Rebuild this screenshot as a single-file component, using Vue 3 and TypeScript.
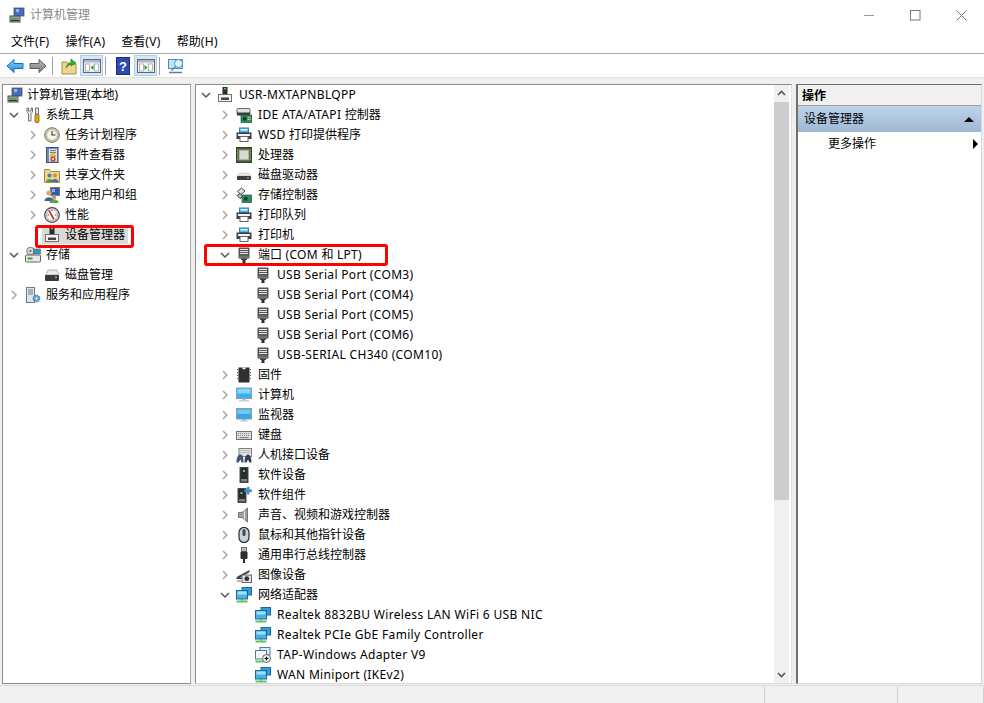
<script setup lang="ts">
const pc = `<rect x="5.500" y="0" width="5" height="7" fill="#2b2b2b"/><rect x="7" y="1" width="2" height="1.500" fill="#3fd060"/><rect x="1" y="7" width="14" height="8" fill="#6e6e6e"/><rect x="2" y="8" width="12" height="6" fill="#f2f2f2"/><rect x="4" y="10.500" width="8" height="2.500" fill="#444"/>`
const mgmt = `<rect x="5" y="1" width="10" height="8" fill="#1f3c8c" stroke="#777" stroke-width="1"/><rect x="6" y="2" width="8" height="6" fill="#3f6fd0"/><rect x="7" y="2" width="3" height="3" fill="#8fb4ee"/><rect x="1" y="9" width="10" height="6" fill="#9a9a9a" stroke="#555"/><rect x="3" y="11" width="6" height="1.500" fill="#38a838"/><path d="M2 13.500h8" stroke="#333"/>`
const tools = `<path d="M2 1v4l1.500 1.500V14h2.500V6.500L7.500 5V1L6 1v3H3.500V1z" fill="#ececec" stroke="#555" stroke-width=".8"/><rect x="10.500" y="1" width="3" height="6" fill="#e4e4e4" stroke="#555" stroke-width=".8"/><rect x="10" y="7.500" width="4" height="8" rx="1" fill="#e2a21a" stroke="#8a5a10" stroke-width=".8"/>`
const clock = `<circle cx="8" cy="8" r="7.300" fill="#d8d4bc" stroke="#6c6c60"/><circle cx="8" cy="8" r="5.400" fill="#f7f5e8" stroke="#a8a488" stroke-width=".7"/><path d="M8 4V8h3.500" fill="none" stroke="#333" stroke-width="1.100"/>`
const log = `<rect x="2.500" y="0.500" width="11.500" height="15" fill="#6f8cb2" stroke="#3f5272"/><rect x="5" y="2" width="8" height="12.500" fill="#dce6f2"/><path d="M6 3.500h6M6 5.500h6" stroke="#6a7a90"/><path d="M9 4.500l3 5H6z" fill="#f0c428" stroke="#a88410" stroke-width=".4"/><circle cx="9" cy="12" r="2.600" fill="#d83a30"/><circle cx="9" cy="12" r="1" fill="#fff"/>`
const share = `<path d="M.500 2.500h5l1 2h9v11H.500z" fill="#eed58c" stroke="#a88a44"/><circle cx="5.500" cy="8.500" r="2" fill="#4e79b8"/><path d="M2 15c0-4 7-4 7 0z" fill="#4a9a4e"/><circle cx="11" cy="8.500" r="2" fill="#c8943c"/><path d="M7.500 15c0-4 7-4 7 0z" fill="#3f6fb0"/>`
const users = `<rect x="6.500" y="0.500" width="9" height="8" fill="#2d5bb8" stroke="#777"/><rect x="8" y="2" width="3" height="3" fill="#8fb4ee"/><circle cx="5" cy="6" r="2.600" fill="#d8a868"/><path d="M.500 14c0-5 9-5 9 0z" fill="#3f5f9a"/><circle cx="10" cy="10" r="2.200" fill="#c89860"/><path d="M5.500 16c0-5 9-5 9 0z" fill="#5aa25a"/>`
const perf = `<circle cx="8" cy="8" r="7.300" fill="#ececec" stroke="#444" stroke-width="1.200"/><circle cx="8" cy="8" r="5.400" fill="#fff" stroke="#999" stroke-width=".7"/><path d="M5 3.500l5 9" stroke="#d02a20" stroke-width="1.600"/><path d="M3.500 8h1.500M11 8h1.500M8 3v1" stroke="#444"/>`
const storage = `<circle cx="5.500" cy="4" r="3.800" fill="#d8d8d8" stroke="#777"/><circle cx="5.500" cy="4" r="1" fill="#555"/><rect x=".500" y="8" width="15" height="7" rx="1" fill="#e8e8e8" stroke="#666"/><rect x="2.500" y="10.500" width="5" height="2" fill="#39a839"/><rect x="8.500" y="2" width="7" height="5" fill="#2f98c4" stroke="#666" stroke-width=".7"/>`
const disk = `<path d="M4 3h9l2 5H2z" fill="#ececec" stroke="#a0a0a0" stroke-width=".8"/><rect x="1" y="8" width="14" height="6" rx="1" fill="#3a3a3a"/><rect x="11" y="9.500" width="2" height="1.600" fill="#56d056"/>`
const services = `<rect x="1.500" y="0.500" width="8" height="15" fill="#dfe5ec" stroke="#6c7a88"/><path d="M3 3h5M3 5h5M3 7h5" stroke="#6c7a88"/><circle cx="11.500" cy="11.500" r="3.300" fill="#6fa0d0" stroke="#2f5f90" stroke-dasharray="1.500 .7"/><circle cx="11.500" cy="11.500" r="1.100" fill="#fff"/>`
const ide = `<rect x="1" y="1.500" width="13" height="6" rx="1" fill="#e0e0e0" stroke="#666"/><rect x="1" y="5.500" width="13" height="3" fill="#3a3a3a"/><rect x="5" y="8" width="11" height="7.500" fill="#2e8a62" stroke="#155a3c" stroke-width=".7"/><rect x="7" y="10" width="3.500" height="3.500" fill="#173b2b"/><path d="M11.500 10.500h3M11.500 12.500h3" stroke="#e4cc60"/>`
const printer = `<rect x="3.500" y="1" width="9" height="4.500" fill="#4bb4e8" stroke="#2a86bc"/><rect x="4.500" y="2" width="7" height="1.500" fill="#dff3fd"/><rect x="0.500" y="5.500" width="15" height="6.500" fill="#3e3e3e"/><rect x="2" y="7" width="12" height="2" fill="#f2f2f2"/><rect x="4" y="9.500" width="8" height="5" fill="#fff" stroke="#666"/>`
const cpu = `<rect x=".500" y=".500" width="15" height="15" fill="#44603a" stroke="#2f4726"/><rect x="3" y="3" width="10" height="10" fill="#d8d8d0" stroke="#8a8a80"/><path d="M1 3.500h1M1 6h1M1 9h1M1 12h1M14 3.500h1M14 6h1M14 9h1M14 12h1" stroke="#d8b860"/>`
const hdd = `<path d="M3.500 6h9l2.500 3H1z" fill="#e8e8e8" stroke="#c0c0c0" stroke-width=".6"/><rect x="1" y="9" width="14" height="4" rx="1" fill="#3c3c3c"/><rect x="11" y="10" width="2" height="1.300" fill="#50d050"/>`
const scsi = `<path d="M1.500 4.500l4-3.500 3.500 3-4 3.500z" fill="#e2e2e2" stroke="#444"/><path d="M1 8.500l3 3 3-2-3-3z" fill="#bbb" stroke="#444"/><rect x="6" y="8" width="9.500" height="7.500" fill="#2e8a62" stroke="#155a3c" stroke-width=".7"/><rect x="8" y="10" width="3.500" height="3.500" fill="#173b2b"/>`
const port = `<rect x="2.500" y="0.500" width="11" height="11" rx="1" fill="#555"/><path d="M4 2.500h8M4 4.500h8M4 6.500h8" stroke="#e8e8e8"/><rect x="3.500" y="8.500" width="9" height="3" fill="#707070"/><rect x="5" y="11.500" width="6" height="1.500" fill="#3f3f3f"/><rect x="6.500" y="13" width="3" height="3" fill="#2f2f2f"/>`
const firmware = `<rect x="2.500" y="0.500" width="11" height="15" fill="#2f2f2f"/><path d="M1 2.500h1.500M1 5.500h1.500M1 8.500h1.500M1 11.500h1.500M13.500 2.500h1.500M13.500 5.500h1.500M13.500 8.500h1.500M13.500 11.500h1.500" stroke="#666"/><path d="M6 .500a2 2 0 0 0 4 0z" fill="#e4e4e4"/>`
const monitor = `<rect x=".500" y="1" width="15" height="10.500" fill="#3cb0f0" stroke="#88a0b0"/><rect x="1.500" y="2" width="13" height="4.500" fill="#84d6fa"/><path d="M6.500 11.500h3V13h-3z" fill="#a8b4bc"/><rect x="3" y="13" width="10" height="1.500" fill="#c8d0d6"/>`
const monitor2 = `<rect x=".500" y="1.500" width="15" height="10.500" fill="#35a6ea" stroke="#88a0b0"/><rect x="1.500" y="2.500" width="13" height="4.500" fill="#72c6f2"/><path d="M6 12h4v1.500H6z" fill="#9eaab2"/><rect x="4" y="13.500" width="8" height="1" fill="#b8c2c8"/>`
const keyboard = `<rect x=".500" y="4.500" width="15" height="8" fill="#dcdcdc" stroke="#707070"/><path d="M2 6.500h12M2 8.500h12" stroke="#8a8a8a" stroke-dasharray="1 1"/><rect x="3.500" y="10" width="9" height="1.200" fill="#888"/>`
const hid = `<rect x="3" y="1.500" width="12.500" height="8" fill="#e2e2e2" stroke="#808080"/><path d="M4.500 3.500h9.500M4.500 5.500h9.500" stroke="#999" stroke-dasharray="1 1"/><path d="M.500 15.500c0-6 2-8 4-8s3 2 3 8h-2l-1-3-2 3z" fill="#3f5478"/><path d="M8.500 15.500c0-6 2-8 3.500-8s3.500 2 3.500 8h-2l-1.500-3-1.500 3z" fill="#2f405c"/>`
const soft = `<rect x="4" y=".500" width="8" height="15" fill="#2c2c2c" stroke="#4a4a4a"/><rect x="7" y="3" width="2" height="2" fill="#44e07a"/><rect x="5" y="12" width="6" height="2.500" fill="#808080"/>`
const softc = `<rect x="2" y="1.500" width="8" height="14" fill="#2c2c2c" stroke="#4a4a4a"/><rect x="4.500" y="5" width="2" height="2" fill="#44e07a"/><rect x="3" y="12" width="6" height="2.500" fill="#808080"/><path d="M11 0h2.500v2.500H16V5h-2.500v2.500H11V5H8.500V2.500H11z" fill="#3e8ed8"/>`
const sound = `<path d="M2.500 5.500h3.500L11.500 1v14L6 10.500H2.500z" fill="#a0a0a0" stroke="#606060" stroke-width=".8"/><path d="M8.500 3.500v9" stroke="#e4e4e4"/>`
const mouse = `<rect x="3" y=".500" width="10" height="15" rx="5" fill="#c8d2dc" stroke="#2a2a2a" stroke-width="1.200"/><rect x="6.500" y="2" width="3" height="7" rx="1.500" fill="#4a4a4a"/>`
const usb = `<rect x="5.500" y=".500" width="5" height="4" fill="#bbb" stroke="#444" stroke-width=".7"/><rect x="4.500" y="4.500" width="7" height="7.500" rx="1" fill="#2f2f2f"/><rect x="7" y="12" width="2" height="4" fill="#2a2a2a"/>`
const camera = `<path d="M.500 10l13-7v2.200L3 11z" fill="#444"/><rect x=".500" y="10.500" width="9" height="1.500" fill="#2a2a2a"/><rect x="6" y="8" width="9.500" height="7.500" fill="#e2e2e2" stroke="#666"/><circle cx="10.800" cy="11.700" r="2.400" fill="#333"/><path d="M1 14h4" stroke="#666"/>`
const net = `<rect x="6" y=".500" width="9.500" height="7.500" fill="#2f9de0" stroke="#1f6996"/><rect x=".500" y="3.500" width="11" height="8.500" fill="#46b2ec" stroke="#1f6996"/><rect x="1.500" y="4.500" width="9" height="3" fill="#a4e0fa"/><rect x="5" y="12" width="2" height="1.500" fill="#5aa85a"/><rect x=".500" y="13.500" width="11" height="2" fill="#5cc45c"/>`
const tap = `<rect x="5" y=".500" width="10" height="7.500" fill="#dfeaf2" stroke="#4a7c9e"/><rect x=".500" y="3.500" width="11" height="8.500" fill="#f0f6fa" stroke="#4a7c9e"/><rect x=".500" y="13.500" width="8" height="2" fill="#5cc45c"/><circle cx="11.500" cy="11.500" r="4" fill="#eee" stroke="#666"/><path d="M11.500 9l.7 1.800 1.800.7-1.800.7-.7 1.800-.7-1.800-1.800-.7 1.800-.7z" fill="#111"/>`

type Row = { t: string; i: string; d: number; a?: 'r' | 'd' }

const leftRows: Row[] = [
  { t: '计算机管理(本地)', i: mgmt, d: 0 },
  { t: '系统工具', i: tools, d: 1, a: 'd' },
  { t: '任务计划程序', i: clock, d: 2, a: 'r' },
  { t: '事件查看器', i: log, d: 2, a: 'r' },
  { t: '共享文件夹', i: share, d: 2, a: 'r' },
  { t: '本地用户和组', i: users, d: 2, a: 'r' },
  { t: '性能', i: perf, d: 2, a: 'r' },
  { t: '设备管理器', i: pc, d: 2 },
  { t: '存储', i: storage, d: 1, a: 'd' },
  { t: '磁盘管理', i: disk, d: 2 },
  { t: '服务和应用程序', i: services, d: 1, a: 'r' },
]

const centerRows: Row[] = [
  { t: 'USR-MXTAPNBLQPP', i: pc, d: 0, a: 'd' },
  { t: 'IDE ATA/ATAPI 控制器', i: ide, d: 1, a: 'r' },
  { t: 'WSD 打印提供程序', i: printer, d: 1, a: 'r' },
  { t: '处理器', i: cpu, d: 1, a: 'r' },
  { t: '磁盘驱动器', i: hdd, d: 1, a: 'r' },
  { t: '存储控制器', i: scsi, d: 1, a: 'r' },
  { t: '打印队列', i: printer, d: 1, a: 'r' },
  { t: '打印机', i: printer, d: 1, a: 'r' },
  { t: '端口 (COM 和 LPT)', i: port, d: 1, a: 'd' },
  { t: 'USB Serial Port (COM3)', i: port, d: 2 },
  { t: 'USB Serial Port (COM4)', i: port, d: 2 },
  { t: 'USB Serial Port (COM5)', i: port, d: 2 },
  { t: 'USB Serial Port (COM6)', i: port, d: 2 },
  { t: 'USB-SERIAL CH340 (COM10)', i: port, d: 2 },
  { t: '固件', i: firmware, d: 1, a: 'r' },
  { t: '计算机', i: monitor, d: 1, a: 'r' },
  { t: '监视器', i: monitor2, d: 1, a: 'r' },
  { t: '键盘', i: keyboard, d: 1, a: 'r' },
  { t: '人机接口设备', i: hid, d: 1, a: 'r' },
  { t: '软件设备', i: soft, d: 1, a: 'r' },
  { t: '软件组件', i: softc, d: 1, a: 'r' },
  { t: '声音、视频和游戏控制器', i: sound, d: 1, a: 'r' },
  { t: '鼠标和其他指针设备', i: mouse, d: 1, a: 'r' },
  { t: '通用串行总线控制器', i: usb, d: 1, a: 'r' },
  { t: '图像设备', i: camera, d: 1, a: 'r' },
  { t: '网络适配器', i: net, d: 1, a: 'd' },
  { t: 'Realtek 8832BU Wireless LAN WiFi 6 USB NIC', i: net, d: 2 },
  { t: 'Realtek PCIe GbE Family Controller', i: net, d: 2 },
  { t: 'TAP-Windows Adapter V9', i: tap, d: 2 },
  { t: 'WAN Miniport (IKEv2)', i: net, d: 2 },
]

const menus = ['文件(F)', '操作(A)', '查看(V)', '帮助(H)']
const leftIndent = (d: number) => ({ paddingLeft: `${[6, 6, 25][d]}px` })
const centerIndent = (d: number) => ({ paddingLeft: `${[5, 24, 24][d]}px` })
// Splits a label into CJK and non-CJK runs: the non-CJK runs get the wider tracking of the original font.
const segs = (t: string) => t.split(/([\u4e00-\u9fff、]+)/).filter(Boolean).map((s) => ({ s, lat: !/[\u4e00-\u9fff、]/.test(s) }))
</script>

<template>
  <div class="win">
    <header class="title">
      <svg class="ico" viewBox="0 0 16 16" v-html="mgmt"></svg>
      <span>计算机管理</span>
      <div class="caption">
        <svg width="11" height="11" viewBox="0 0 11 11"><path d="M0 5.500h10" stroke="#999" /></svg>
        <svg width="11" height="11" viewBox="0 0 11 11"><rect x=".5" y=".5" width="9.500" height="9.500" fill="none" stroke="#777" /></svg>
        <svg width="11" height="11" viewBox="0 0 11 11"><path d="M.5.500l10 10M10.500.500l-10 10" stroke="#777" /></svg>
      </div>
    </header>

    <nav class="menu">
      <span v-for="m in menus" :key="m">
        <span v-for="(p, k) in segs(m)" :key="k" :class="{ lat: p.lat }">{{ p.s }}</span>
      </span>
    </nav>

    <div class="toolbar">
      <button class="tb">
        <svg width="18" height="16" viewBox="0 0 18 16">
          <defs><linearGradient id="bk" x1="0" y1="0" x2="0" y2="1"><stop offset="0" stop-color="#8fd2fa" /><stop offset="1" stop-color="#1e8ae0" /></linearGradient></defs>
          <path d="M1 8l7-6.500v4h9v5H8v4z" fill="url(#bk)" stroke="#1d6fb8" />
        </svg>
      </button>
      <button class="tb">
        <svg width="18" height="16" viewBox="0 0 18 16">
          <defs><linearGradient id="fw" x1="0" y1="0" x2="0" y2="1"><stop offset="0" stop-color="#bcbcbc" /><stop offset="1" stop-color="#7a7a7a" /></linearGradient></defs>
          <path d="M17 8l-7-6.500v4H1v5h9v4z" fill="url(#fw)" stroke="#5e5e5e" />
        </svg>
      </button>
      <i class="sep s-a"></i>
      <button class="tb">
        <svg width="16" height="18" viewBox="0 0 16 18"><path d="M1 5h5l1 2h8v10H1z" fill="#ecd88c" stroke="#a68f44" /><path d="M5 11c1-4 3-5 5-6V2l5 4-5 3V7c-2 1-4 2-5 4z" fill="#3cac3c" stroke="#1f7a1f" stroke-width=".6" /></svg>
      </button>
      <button class="tb on">
        <svg width="18" height="16" viewBox="0 0 18 16"><rect x=".5" y="1.500" width="17" height="13" fill="#f2f2f2" stroke="#666" /><rect x="1" y="2" width="16" height="2.500" fill="#a9b9cf" /><rect x="2.500" y="6" width="4" height="7" fill="#fff" stroke="#888" stroke-width=".6" /><rect x="11.500" y="6" width="4" height="7" fill="#fff" stroke="#888" stroke-width=".6" /><path d="M10.500 7v5l-3-2.500z" fill="#2a9a3a" /></svg>
      </button>
      <i class="sep s-b"></i>
      <button class="tb">
        <svg width="14" height="18" viewBox="0 0 14 18"><rect x=".5" y=".5" width="13" height="17" fill="#2d4ab0" stroke="#1c2f7a" /><text x="7" y="14" text-anchor="middle" font-size="13" font-weight="700" fill="#fff" font-family="Liberation Sans">?</text></svg>
      </button>
      <button class="tb on">
        <svg width="18" height="16" viewBox="0 0 18 16"><rect x=".5" y="1.500" width="17" height="13" fill="#f2f2f2" stroke="#666" /><rect x="1" y="2" width="16" height="2.500" fill="#a9b9cf" /><rect x="2.500" y="6" width="4" height="7" fill="#fff" stroke="#888" stroke-width=".6" /><rect x="11.500" y="6" width="4" height="7" fill="#fff" stroke="#888" stroke-width=".6" /><path d="M7.500 7v5l3-2.500z" fill="#2a9a3a" /></svg>
      </button>
      <i class="sep s-c"></i>
      <button class="tb">
        <svg width="16" height="16" viewBox="0 0 16 16"><rect x=".5" y="1.500" width="14" height="9" fill="#bfe4f8" stroke="#3a94c8" /><circle cx="10.500" cy="5.500" r="4" fill="#dff2fc" stroke="#4a9ac8" /><path d="M7.500 8.500l-4 4M1 14.500h13" stroke="#6c7c88" stroke-width="1.400" /></svg>
      </button>
    </div>

    <main class="panes">
      <section class="pane tree-l">
        <div v-for="r in leftRows" :key="r.t" class="row" :style="leftIndent(r.d)">
          <span class="arrow">
            <svg v-if="r.a === 'd'" width="10" height="10" viewBox="0 0 10 10"><path d="M1 3l4 4 4-4" fill="none" stroke="#555" stroke-width="1.500" /></svg>
            <svg v-else-if="r.a === 'r'" width="10" height="10" viewBox="0 0 10 10"><path d="M3 1l4 4-4 4" fill="none" stroke="#a6a6a6" stroke-width="1.500" /></svg>
          </span>
          <span class="cell" :class="{ root: r.d === 0, sel: r.t === '设备管理器' }">
            <svg class="ico" viewBox="0 0 16 16" v-html="r.i"></svg>
            <span class="label">{{ r.t }}</span>
          </span>
        </div>
        <div class="mark mark-l"></div>
      </section>

      <section class="pane tree-c">
        <div class="c-body">
          <div v-for="(r, n) in centerRows" :key="n" class="row" :style="centerIndent(r.d)">
            <span class="arrow" :class="{ lead: r.d === 2 }">
              <svg v-if="r.a === 'd'" width="10" height="10" viewBox="0 0 10 10"><path d="M1 3l4 4 4-4" fill="none" stroke="#555" stroke-width="1.500" /></svg>
              <svg v-else-if="r.a === 'r'" width="10" height="10" viewBox="0 0 10 10"><path d="M3 1l4 4-4 4" fill="none" stroke="#a6a6a6" stroke-width="1.500" /></svg>
            </span>
            <span class="c-ico"><svg class="ico" viewBox="0 0 16 16" v-html="r.i"></svg></span>
            <span class="label"><span v-for="(p, k) in segs(r.t)" :key="k" :class="{ lat: p.lat }">{{ p.s }}</span></span>
          </div>
          <div class="mark mark-c"></div>
        </div>
        <div class="scroll">
          <svg class="sb" width="9" height="7" viewBox="0 0 9 7"><path d="M1 5l3.500-3.500L8 5" fill="none" stroke="#555" stroke-width="1.600" /></svg>
          <div class="track"><div class="thumb"></div></div>
          <svg class="sb" width="9" height="7" viewBox="0 0 9 7"><path d="M1 2l3.500 3.500L8 2" fill="none" stroke="#555" stroke-width="1.600" /></svg>
        </div>
      </section>

      <section class="pane actions">
        <div class="a-head">操作</div>
        <div class="a-band"><span>设备管理器</span><i class="tri-up"></i></div>
        <div class="a-item"><span>更多操作</span><i class="tri-right"></i></div>
      </section>
    </main>

    <footer class="status">
      <div class="s1"></div><div class="s2"></div><div class="s3"></div>
    </footer>
  </div>
</template>

<style>
html, body { margin: 0; background: #fff; overflow: hidden; }
</style>

<style scoped>
.win {
  width: 984px; height: 703px; display: flex; flex-direction: column; overflow: hidden;
  font: 12px/20px "Noto Sans", "Noto Sans CJK SC", sans-serif; color: #000; background: #fff;
}
.ico { width: 16px; height: 16px; display: block; flex: none; }
.lat { letter-spacing: .33px; }
.title { height: 30px; flex: none; display: flex; align-items: center; padding-left: 9px; gap: 5px; color: #8a8a8a; }
.caption { margin-left: auto; display: flex; gap: 35px; padding-right: 17px; }
.menu { height: 22px; padding-top: 1px; flex: none; display: flex; align-items: center; gap: 16px; padding-left: 11px; border-bottom: 1px solid #a9a9b0; }
.toolbar { height: 23px; flex: none; display: flex; align-items: center; padding-left: 3px; background: #fff; }
.tb { width: 23px; height: 21px; padding: 0; border: 1px solid transparent; background: none; display: flex; align-items: center; justify-content: center; box-sizing: border-box; }
.tb.on { background: #d4e8fa; border-color: #a8d2f2; }
.sep { width: 1px; height: 18px; background: #a0a0a0; flex: none; }
.s-a { margin: 0 4px 0 3px; }
.s-b { margin: 0 5px 0 2px; }
.s-c { margin: 0 4px 0 2px; }
.panes { flex: 1; min-height: 0; background: #efefef; display: flex; gap: 4px; padding: 6px 2px 1px; border-top: 1px solid #e2e2e2; }
.pane { background: #fff; border: 1px solid #8c8c8c; position: relative; box-sizing: border-box; }
.tree-l { width: 189px; border-right-color: #a8a8a8; }
.tree-c { width: 597px; display: flex; border-right-color: #e0e0e0; border-bottom-color: #d8d8d8; overflow: hidden; }
.c-body { flex: 1; min-width: 0; position: relative; overflow: hidden; }
.actions { flex: 1; border-left: 2px solid #707070; border-top-color: #707070; border-right-color: #d8d8d8; border-bottom-color: #d8d8d8; }
.row { height: 20px; display: flex; align-items: center; white-space: nowrap; }
.arrow { width: 13px; height: 16px; display: flex; align-items: center; flex: none; }
.arrow.lead { width: 32px; }
.cell { height: 18px; display: flex; align-items: center; gap: 3px; margin-left: 1px; padding-left: 2px; padding-right: 1px; }
.cell.root { margin-left: -15px; gap: 2px; padding-left: 0; }
.cell.sel { background: #d9d9d9; }
.c-ico { margin: 0 4px 0 3px; }
.label { padding: 0 2px; height: 20px; }
.mark { position: absolute; border: 3px solid #f00; border-radius: 3px; box-sizing: border-box; }
.mark-l { left: 32px; top: 140px; width: 99px; height: 23px; }
.mark-c { left: 8px; top: 159px; width: 184px; height: 22px; }
.scroll { width: 15px; margin-right: 2px; flex: none; background: #f0f0f0; display: flex; flex-direction: column; align-items: center; }
.sb { flex: none; margin: 5px 0; }
.track { flex: 1; width: 100%; }
.thumb { height: 398px; background: #cdcdcd; }
.a-head { height: 21px; padding-left: 4px; line-height: 21px; box-sizing: border-box; background: #f0f0f0; border-bottom: 1px solid #a0a0a0; font-weight: 600; }
.a-band { height: 26px; padding: 0 5px 0 6px; display: flex; justify-content: space-between; align-items: center; background: linear-gradient(#bdd3ea, #9eb8d4); }
.a-item { height: 23px; padding-left: 30px; padding-right: 3px; display: flex; justify-content: space-between; align-items: center; }
.tri-up { width: 0; height: 0; border: 5px solid transparent; border-top: 0; border-bottom: 5px solid #000; margin-right: 2px; }
.tri-right { width: 0; height: 0; border: 5px solid transparent; border-right: 0; border-left: 5px solid #000; }
.status { height: 18px; flex: none; box-sizing: border-box; background: #f0f0f0; display: flex; border-top: 1px solid #dcdcdc; }
.s1, .s2, .s3 { box-sizing: border-box; border-right: 1px solid #d0d0d0; margin-top: 1px; }
.s1 { width: 765px; }
.s2 { width: 133px; }
.s3 { width: 86px; }
</style>
